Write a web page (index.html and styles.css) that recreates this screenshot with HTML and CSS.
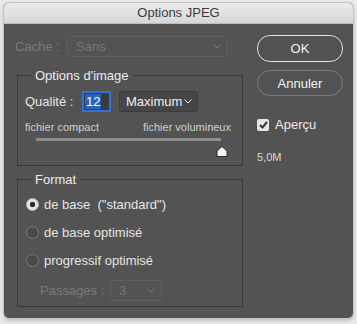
FILE: index.html
```html
<!DOCTYPE html>
<html lang="fr">
<head>
    <meta charset="UTF-8">
    <title>Options JPEG</title>
    <link rel="stylesheet" href="styles.css">
</head>
<body>
    <div class="window">
        <div class="titlebar">Options JPEG</div>

        <div class="content">
            <div class="main">
                <div class="cache-row">
                    <span class="label disabled">Cache :</span>
                    <div class="select select-cache disabled">
                        <span>Sans</span>
                        <svg class="chev" width="8" height="5" viewBox="0 0 8 5"><path d="M0.5 0.5 L4 4 L7.5 0.5" fill="none" stroke="currentColor" stroke-width="1"/></svg>
                    </div>
                </div>

                <fieldset class="group group-image">
                    <legend>Options d'image</legend>
                    <div class="quality-row">
                        <span class="label">Qualité :</span>
                        <div class="quality-input"><span class="sel">12</span></div>
                        <div class="select select-max">
                            <span>Maximum</span>
                            <svg class="chev" width="8" height="5" viewBox="0 0 8 5"><path d="M0.5 0.5 L4 4 L7.5 0.5" fill="none" stroke="currentColor" stroke-width="1"/></svg>
                        </div>
                    </div>
                    <div class="size-labels">
                        <span>fichier compact</span>
                        <span>fichier volumineux</span>
                    </div>
                    <div class="slider">
                        <div class="track"></div>
                        <svg class="thumb" width="12" height="11" viewBox="0 0 12 11"><path d="M6 0.5 L11 5 L11 10.5 L1 10.5 L1 5 Z" fill="#f4f4f4" stroke="#2e2e2e" stroke-width="1" stroke-linejoin="round"/></svg>
                    </div>
                </fieldset>

                <fieldset class="group group-format">
                    <legend>Format</legend>
                    <div class="radio-row">
                        <span class="radio checked"></span>
                        <span>de base&nbsp; ("standard")</span>
                    </div>
                    <div class="radio-row">
                        <span class="radio"></span>
                        <span>de base optimisé</span>
                    </div>
                    <div class="radio-row">
                        <span class="radio"></span>
                        <span>progressif optimisé</span>
                    </div>
                    <div class="passes-row">
                        <span class="label disabled">Passages :</span>
                        <div class="select select-passes disabled">
                            <span>3</span>
                            <svg class="chev" width="8" height="5" viewBox="0 0 8 5"><path d="M0.5 0.5 L4 4 L7.5 0.5" fill="none" stroke="currentColor" stroke-width="1"/></svg>
                        </div>
                    </div>
                </fieldset>
            </div>

            <div class="side">
                <button class="btn btn-default">OK</button>
                <button class="btn">Annuler</button>
                <label class="preview">
                    <span class="checkbox">
                        <svg width="9" height="8" viewBox="0 0 9 8"><path d="M1 4 L3.5 6.5 L8 1" fill="none" stroke="#333" stroke-width="2"/></svg>
                    </span>
                    Aperçu
                </label>
                <div class="filesize">5,0M</div>
            </div>
        </div>
    </div>
</body>
</html>
```

FILE: styles.css
```css
html, body {
    margin: 0;
    padding: 0;
}

body {
    background: #e9e9e9;
    font-family: "Liberation Sans", Arial, sans-serif;
    font-size: 13px;
    color: #e6e6e6;
    width: 357px;
    height: 324px;
    overflow: hidden;
}

.window {
    margin: 3px 4px 0 4px;
    width: 349px;
    height: 315px;
    border-radius: 5px;
    overflow: hidden;
    background: #535353;
    box-shadow: 0 0 0 1px #c4c4c4, 0 2px 4px rgba(0, 0, 0, 0.25);
    display: flex;
    flex-direction: column;
}

.titlebar {
    height: 20px;
    line-height: 20px;
    text-align: center;
    color: #3b3b3b;
    background: linear-gradient(#ececec, #d6d6d6);
    border-bottom: 1px solid #bdbdbd;
    font-size: 13px;
}

.content {
    display: flex;
    padding: 12px 10px 0 11px;
}

.main {
    width: 228px;
}

.label {
    color: #e6e6e6;
}

.disabled {
    color: #7a7a7a;
}

.cache-row {
    display: flex;
    align-items: center;
    height: 21px;
}

.cache-row .label {
    width: 52px;
}

.select {
    display: flex;
    align-items: center;
    justify-content: space-between;
    box-sizing: border-box;
    height: 21px;
    padding: 0 6px 0 8px;
    border-radius: 3px;
}

.select.disabled {
    border: 1px solid #5f5f5f;
    color: #787878;
}

.select-cache {
    width: 161px;
}

.select-max {
    width: 79px;
    background: #464646;
    border: 1px solid #3c3c3c;
    color: #f0f0f0;
    padding: 0 5px 0 6px;
}

.select-passes {
    width: 52px;
}

.chev {
    display: block;
}

.group {
    margin: 0 0 0 2px;
    padding: 0 7px;
    border: 1px solid #383838;
    width: 226px;
    box-sizing: border-box;
}

.group legend {
    margin-left: 6px;
    padding: 0 4px;
    font-size: 13px;
    color: #ececec;
}

.group-image {
    margin-top: 11px;
    height: 98px;
}

.quality-row {
    display: flex;
    align-items: center;
    margin-top: 8px;
    height: 21px;
}

.quality-row .label {
    width: 57px;
}

.quality-input {
    box-sizing: border-box;
    width: 29px;
    height: 21px;
    border: 2px solid #3273d8;
    background: #3b3b3b;
    padding: 1px 0 0 1px;
    line-height: 15px;
    margin-right: 8px;
}

.quality-input .sel {
    background: #2c63b8;
    color: #ffffff;
    padding: 0 1px;
}

.size-labels {
    display: flex;
    justify-content: space-between;
    font-size: 11px;
    color: #cfcfcf;
    margin-top: 9px;
    width: 206px;
}

.slider {
    position: relative;
    height: 16px;
    margin-left: 11px;
    width: 192px;
}

.track {
    margin-top: 5px;
    height: 3px;
    width: 185px;
    background: #8c8c8c;
}

.thumb {
    position: absolute;
    left: 180px;
    top: 8px;
}

.group-format {
    margin-top: 6px;
    height: 135px;
}

.radio-row {
    display: flex;
    align-items: center;
    gap: 5px;
    height: 20px;
    margin-top: 8px;
}

.radio-row:first-of-type {
    margin-top: 7px;
}

.radio {
    box-sizing: border-box;
    width: 13px;
    height: 13px;
    border-radius: 50%;
    border: 1px solid #7c7c7c;
    background: #4a4a4a;
    margin-left: 1px;
}

.radio.checked {
    border-color: #bdbdbd;
    background: radial-gradient(circle, #2c2c2c 0 2.5px, #e4e4e4 3px);
}

.passes-row {
    display: flex;
    align-items: center;
    margin: 10px 0 0 15px;
}

.passes-row .label {
    width: 70px;
}

.side {
    margin-left: 14px;
    display: flex;
    flex-direction: column;
    width: 86px;
}

.btn {
    font-family: inherit;
    font-size: 13px;
    color: #f2f2f2;
    background: transparent;
    border: 1px solid #7d7d7d;
    border-radius: 13px;
    height: 26px;
    padding: 0;
}

.btn-default {
    border-color: #e2e2e2;
    height: 27px;
    margin-top: -1px;
    margin-bottom: 8px;
}

.preview {
    display: flex;
    align-items: center;
    gap: 6px;
    margin-top: 21px;
    color: #ececec;
}

.checkbox {
    display: flex;
    align-items: center;
    justify-content: center;
    width: 12px;
    height: 12px;
    border-radius: 2px;
    background: #e6e6e6;
}

.filesize {
    margin-top: 19px;
    font-size: 11px;
    color: #dcdcdc;
}
```
